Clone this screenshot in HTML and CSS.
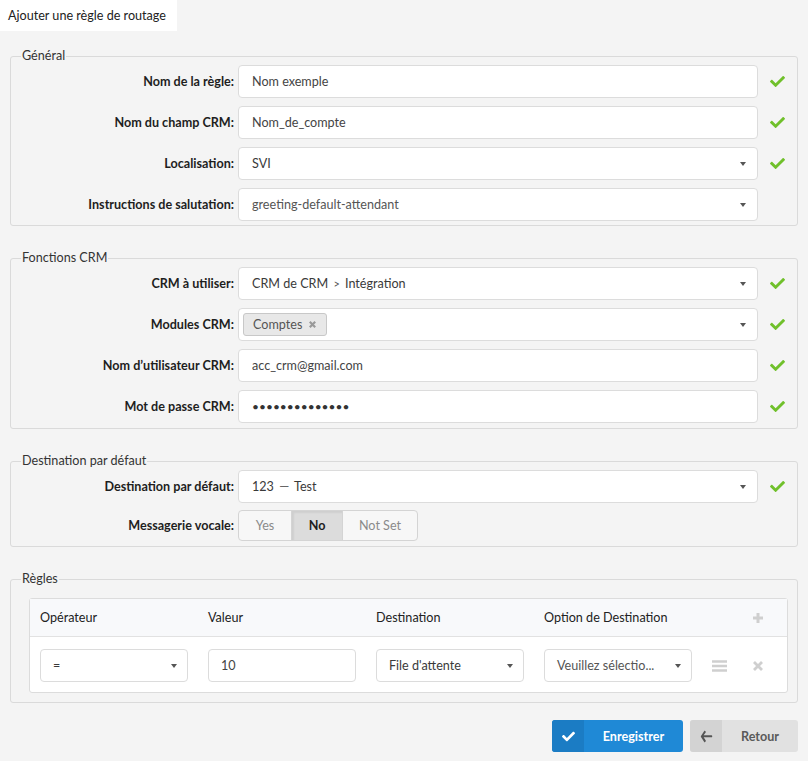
FILE: index.html
```html
<!DOCTYPE html>
<html lang="fr">
<head>
  <meta charset="UTF-8">
  <title>Ajouter une règle de routage</title>
  <link rel="stylesheet" href="styles.css">
</head>
<body>
  <div class="tabs">
    <div class="tab active">Ajouter une règle de routage</div>
  </div>
  <form class="page">
    <fieldset class="section">
      <legend>Général</legend>
      <div class="form-row">
        <label>Nom de la règle:</label>
        <input class="control" type="text" value="Nom exemple">
        <span class="status"><svg viewBox="0 0 512 512"><path d="M173.9 439.4l-166.4-166.4c-10-10-10-26.2 0-36.2l36.2-36.2c10-10 26.2-10 36.2 0L192 312.7 432.1 72.6c10-10 26.2-10 36.2 0l36.2 36.2c10 10 10 26.2 0 36.2L210.1 439.4c-10 10-26.2 10-36.2 0z"/></svg></span>
      </div>
      <div class="form-row">
        <label>Nom du champ CRM:</label>
        <input class="control" type="text" value="Nom_de_compte">
        <span class="status"><svg viewBox="0 0 512 512"><path d="M173.9 439.4l-166.4-166.4c-10-10-10-26.2 0-36.2l36.2-36.2c10-10 26.2-10 36.2 0L192 312.7 432.1 72.6c10-10 26.2-10 36.2 0l36.2 36.2c10 10 10 26.2 0 36.2L210.1 439.4c-10 10-26.2 10-36.2 0z"/></svg></span>
      </div>
      <div class="form-row">
        <label>Localisation:</label>
        <div class="control select"><span class="select-value">SVI</span><span class="caret"></span></div>
        <span class="status"><svg viewBox="0 0 512 512"><path d="M173.9 439.4l-166.4-166.4c-10-10-10-26.2 0-36.2l36.2-36.2c10-10 26.2-10 36.2 0L192 312.7 432.1 72.6c10-10 26.2-10 36.2 0l36.2 36.2c10 10 10 26.2 0 36.2L210.1 439.4c-10 10-26.2 10-36.2 0z"/></svg></span>
      </div>
      <div class="form-row">
        <label>Instructions de salutation:</label>
        <div class="control select"><span class="select-value muted">greeting-default-attendant</span><span class="caret"></span></div>
        <span class="status"></span>
      </div>
    </fieldset>

    <fieldset class="section crm">
      <legend>Fonctions CRM</legend>
      <div class="form-row">
        <label>CRM à utiliser:</label>
        <div class="control select"><span class="select-value">CRM de CRM <span class="sep">&gt;</span> Intégration</span><span class="caret"></span></div>
        <span class="status"><svg viewBox="0 0 512 512"><path d="M173.9 439.4l-166.4-166.4c-10-10-10-26.2 0-36.2l36.2-36.2c10-10 26.2-10 36.2 0L192 312.7 432.1 72.6c10-10 26.2-10 36.2 0l36.2 36.2c10 10 10 26.2 0 36.2L210.1 439.4c-10 10-26.2 10-36.2 0z"/></svg></span>
      </div>
      <div class="form-row">
        <label>Modules CRM:</label>
        <div class="control select multi">
          <span class="tag">Comptes <svg class="tag-remove" viewBox="0 0 10 10"><path d="M2 2l6 6M8 2l-6 6"/></svg></span>
          <span class="caret"></span>
        </div>
        <span class="status"><svg viewBox="0 0 512 512"><path d="M173.9 439.4l-166.4-166.4c-10-10-10-26.2 0-36.2l36.2-36.2c10-10 26.2-10 36.2 0L192 312.7 432.1 72.6c10-10 26.2-10 36.2 0l36.2 36.2c10 10 10 26.2 0 36.2L210.1 439.4c-10 10-26.2 10-36.2 0z"/></svg></span>
      </div>
      <div class="form-row">
        <label>Nom d’utilisateur CRM:</label>
        <input class="control" type="text" value="acc_crm@gmail.com">
        <span class="status"><svg viewBox="0 0 512 512"><path d="M173.9 439.4l-166.4-166.4c-10-10-10-26.2 0-36.2l36.2-36.2c10-10 26.2-10 36.2 0L192 312.7 432.1 72.6c10-10 26.2-10 36.2 0l36.2 36.2c10 10 10 26.2 0 36.2L210.1 439.4c-10 10-26.2 10-36.2 0z"/></svg></span>
      </div>
      <div class="form-row">
        <label>Mot de passe CRM:</label>
        <div class="control password">••••••••••••••</div>
        <span class="status"><svg viewBox="0 0 512 512"><path d="M173.9 439.4l-166.4-166.4c-10-10-10-26.2 0-36.2l36.2-36.2c10-10 26.2-10 36.2 0L192 312.7 432.1 72.6c10-10 26.2-10 36.2 0l36.2 36.2c10 10 10 26.2 0 36.2L210.1 439.4c-10 10-26.2 10-36.2 0z"/></svg></span>
      </div>
    </fieldset>

    <fieldset class="section destination">
      <legend>Destination par défaut</legend>
      <div class="form-row">
        <label>Destination par défaut:</label>
        <div class="control select"><span class="select-value">123 <span class="dash">—</span> Test</span><span class="caret"></span></div>
        <span class="status"><svg viewBox="0 0 512 512"><path d="M173.9 439.4l-166.4-166.4c-10-10-10-26.2 0-36.2l36.2-36.2c10-10 26.2-10 36.2 0L192 312.7 432.1 72.6c10-10 26.2-10 36.2 0l36.2 36.2c10 10 10 26.2 0 36.2L210.1 439.4c-10 10-26.2 10-36.2 0z"/></svg></span>
      </div>
      <div class="form-row tight">
        <label>Messagerie vocale:</label>
        <div class="btn-group">
          <button type="button" class="toggle yes">Yes</button>
          <button type="button" class="toggle no active">No</button>
          <button type="button" class="toggle notset">Not Set</button>
        </div>
      </div>
    </fieldset>

    <fieldset class="section last">
      <legend>Règles</legend>
      <div class="rules">
        <div class="rules-head">
          <div>Opérateur</div>
          <div>Valeur</div>
          <div>Destination</div>
          <div>Option de Destination</div>
          <div class="rule-actions">
            <svg class="icon-plus" viewBox="0 0 12 12"><path d="M6 1v10M1 6h10"/></svg>
          </div>
        </div>
        <div class="rules-row">
          <div class="control select small"><span class="select-value">=</span><span class="caret"></span></div>
          <input class="control small" type="text" value="10">
          <div class="control select small"><span class="select-value">File d'attente</span><span class="caret"></span></div>
          <div class="control select small"><span class="select-value muted">Veuillez sélectio...</span><span class="caret"></span></div>
          <div class="rule-actions">
            <svg class="icon-bars" viewBox="0 0 15 12"><path d="M0 1.5h15M0 6h15M0 10.5h15"/></svg>
            <svg class="icon-times" viewBox="0 0 12 12"><path d="M2 2l8 8M10 2l-8 8"/></svg>
          </div>
        </div>
      </div>
    </fieldset>

    <div class="actions">
      <button type="button" class="btn btn-primary">
        <span class="btn-icon"><svg viewBox="0 0 512 512"><path d="M173.9 439.4l-166.4-166.4c-10-10-10-26.2 0-36.2l36.2-36.2c10-10 26.2-10 36.2 0L192 312.7 432.1 72.6c10-10 26.2-10 36.2 0l36.2 36.2c10 10 10 26.2 0 36.2L210.1 439.4c-10 10-26.2 10-36.2 0z"/></svg></span>
        <span class="btn-label">Enregistrer</span>
      </button>
      <button type="button" class="btn btn-default">
        <span class="btn-icon"><svg viewBox="0 0 448 512"><path d="M190.5 449.3l-22.2 22.2c-9.4 9.4-24.6 9.4-33.9 0L7 273c-9.4-9.4-9.4-24.6 0-33.9L134.4 40.6c9.4-9.4 24.6-9.4 33.9 0l22.2 22.2c9.5 9.5 9.3 25-.4 34.3L111.7 208H424c13.3 0 24 10.7 24 24v32c0 13.3-10.7 24-24 24H111.7l78.4 117c9.8 9.3 10 24.8.4 34.3z"/></svg></span>
        <span class="btn-label">Retour</span>
      </button>
    </div>
  </form>
</body>
</html>
```

FILE: styles.css
```css
* {
  box-sizing: border-box;
}
body {
  margin: 0;
  font-family: Lato, "Open Sans", sans-serif;
  font-size: 12.6px;
  color: #222;
  background: #f4f4f4;
}
.tabs {
  display: flex;
  height: 31px;
}
.tab {
  background: #fff;
  width: 177px;
  padding: 0 0 0 8px;
  line-height: 31px;
  white-space: nowrap;
  color: #222;
}
.page {
  padding-top: 17px;
}
.section {
  margin: 0 10px 24px;
  padding: 1px 10px 4px;
  border: 1px solid #dadada;
  border-radius: 3px;
}
.section.crm {
  padding-bottom: 5px;
}
.section.destination {
  padding-bottom: 5px;
}
.section legend {
  padding: 0 1px;
  line-height: 16px;
  color: #333;
}
.section.last {
  margin-bottom: 17px;
  padding-bottom: 9px;
}
.form-row {
  display: flex;
  align-items: center;
  margin-bottom: 8px;
}
.form-row:last-child {
  margin-bottom: 0;
}
.form-row.tight {
  margin-top: -1px;
}
.form-row label {
  width: 213px;
  margin-right: 4px;
  text-align: right;
  font-weight: bold;
  color: #1e1e1e;
}
.control {
  display: flex;
  align-items: center;
  width: 520px;
  height: 33px;
  padding: 0 13px;
  border: 1px solid #dcdcdc;
  border-radius: 4px;
  background: #fff;
  font-family: inherit;
  font-size: 12.6px;
  color: #444;
  outline: none;
}
.control.small {
  width: 148px;
  padding: 0 12px;
}
.select {
  position: relative;
  justify-content: space-between;
}
.select-value {
  color: #3a3a3a;
  white-space: nowrap;
}
.select-value.muted {
  color: #555;
}
.select-value .sep {
  font-size: 11px;
  color: #555;
  padding: 0 2px;
}
.select-value .dash {
  color: #666;
  padding: 0 2px;
}
.caret {
  border-left: 3.5px solid transparent;
  border-right: 3.5px solid transparent;
  border-top: 4px solid #555;
  margin-right: -2px;
}
.select.multi {
  padding-left: 4px;
}
.tag {
  display: inline-flex;
  align-items: center;
  height: 23px;
  padding: 0 9px;
  border: 1px solid #c8c8c8;
  border-radius: 3px;
  background: #e8e8e8;
  color: #555;
}
.tag-remove {
  width: 9px;
  height: 9px;
  margin-left: 6px;
  stroke: #999;
  stroke-width: 2.4;
}
.password {
  font-size: 12px;
  color: #333;
}
.status {
  flex: 1;
  display: flex;
  justify-content: flex-end;
  padding-right: 1px;
}
.status svg {
  width: 17px;
  height: 15px;
  fill: #70c02b;
}
.btn-group {
  display: flex;
  height: 31px;
  border: 1px solid #d4d4d4;
  border-radius: 4px;
  background: #f7f7f7;
  overflow: hidden;
}
.toggle {
  border: none;
  border-right: 1px solid #d4d4d4;
  background: transparent;
  font-family: inherit;
  font-size: 12.6px;
  color: #8a8a8a;
  padding: 0;
}
.toggle:last-child {
  border-right: none;
}
.toggle.yes { width: 53px; }
.toggle.no { width: 51px; }
.toggle.notset { width: 74px; }
.toggle.active {
  background: #dcdcdc;
  color: #1e1e1e;
  font-weight: bold;
  box-shadow: inset 2px 2px 2px rgba(0, 0, 0, 0.06);
}
.rules {
  margin: 10px -1px 0 8px;
  border: 1px solid #dcdcdc;
  border-radius: 3px;
  background: #fff;
}
.rules-head,
.rules-row {
  display: grid;
  grid-template-columns: repeat(4, 148px) 1fr;
  column-gap: 20px;
  align-items: center;
  padding: 0 0 0 10px;
}
.rules-head {
  height: 38px;
  background: #f8f9fb;
  border-bottom: 1px solid #e2e2e2;
  color: #222;
}
.rules-row {
  padding-top: 12px;
  padding-bottom: 10px;
}
.rule-actions {
  display: flex;
  align-items: center;
  justify-content: flex-end;
  padding-right: 23px;
}
.icon-plus {
  width: 12px;
  height: 12px;
  stroke: #cfcfcf;
  stroke-width: 3;
}
.icon-bars {
  width: 15px;
  height: 12px;
  stroke: #cfcfcf;
  stroke-width: 2.6;
  margin-right: 25px;
}
.icon-times {
  width: 12px;
  height: 12px;
  stroke: #cfcfcf;
  stroke-width: 2.8;
}
.actions {
  display: flex;
  justify-content: flex-end;
  gap: 7px;
  margin: 0 10px;
}
.btn {
  display: flex;
  height: 32px;
  padding: 0;
  border: none;
  border-radius: 3px;
  overflow: hidden;
  font-family: inherit;
  font-size: 12.6px;
  font-weight: bold;
}
.btn-icon {
  display: flex;
  align-items: center;
  justify-content: center;
  width: 32px;
  height: 100%;
}
.btn-icon svg {
  width: 13px;
  height: 13px;
}
.btn-label {
  flex: 1;
  display: flex;
  align-items: center;
  justify-content: center;
  height: 100%;
}
.btn-primary {
  width: 131px;
  background: #1f89d6;
  color: #fff;
}
.btn-primary .btn-icon {
  background: #1b7cc4;
}
.btn-primary .btn-icon svg {
  fill: #fff;
}
.btn-default {
  width: 108px;
  background: #e1e1e1;
  color: #5a5a5a;
}
.btn-default .btn-icon {
  background: #d3d3d3;
}
.btn-default .btn-icon svg {
  fill: #555;
}
```
